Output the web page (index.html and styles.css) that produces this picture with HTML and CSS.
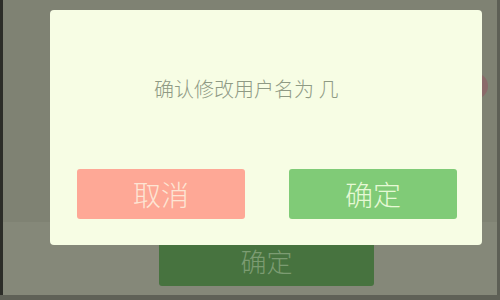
FILE: index.html
```html
<!DOCTYPE html>
<html lang="zh">
<head>
<meta charset="utf-8">
<link rel="stylesheet" href="styles.css">
</head>
<body>
<div class="screen">
  <div class="edge-left"></div>
  <div class="app">
    <div class="app-top">
      <span class="dot"></span>
    </div>
    <div class="app-bottom">
      <div class="bg-btn">确定</div>
    </div>
  </div>
  <div class="edge-right"></div>
  <div class="bottom-bar"></div>

  <div class="dialog">
    <p class="message">确认修改用户名为 几</p>
    <div class="actions">
      <div class="btn btn-cancel">取消</div>
      <div class="btn btn-ok">确定</div>
    </div>
  </div>
</div>
</body>
</html>
```

FILE: styles.css
```css
html, body {
  margin: 0;
  padding: 0;
  width: 500px;
  height: 300px;
  overflow: hidden;
}

body {
  font-family: "Noto Sans CJK SC", "Noto Sans", sans-serif;
  background: #62645a;
}

.screen {
  position: relative;
  width: 500px;
  height: 300px;
  display: grid;
  grid-template-columns: 3px 1fr 3px;
  grid-template-rows: 295px 5px;
}

.edge-left {
  background: #2c2d28;
}

.edge-right {
  background: #5d5f55;
}

.bottom-bar {
  grid-column: 1 / 4;
  background: #5f6157;
}

.app {
  display: flex;
  flex-direction: column;
}

.app-top {
  height: 222px;
  background: #7f8273;
  display: flex;
  align-items: center;
  justify-content: flex-end;
  padding-top: 0;
  box-sizing: border-box;
  padding-bottom: 50px;
}

.dot {
  width: 26px;
  height: 26px;
  border-radius: 50%;
  background: #8a6a6a;
  margin-right: 9px;
}

.app-bottom {
  flex: 1;
  background: #858879;
  padding-top: 14px;
  padding-left: 156px;
}

.bg-btn {
  width: 215px;
  height: 50px;
  border-radius: 3px;
  background: #47733f;
  color: #7c9c72;
  font-size: 26px;
  line-height: 50px;
  text-align: center;
  font-weight: 300;
}

.dialog {
  position: absolute;
  left: 50px;
  top: 10px;
  width: 432px;
  height: 235px;
  background: #f7fde4;
  border-radius: 4px;
  display: flex;
  flex-direction: column;
}

.message {
  margin: 0;
  padding: 66px 0 0 104px;
  font-size: 20px;
  line-height: 26px;
  color: #8f9a84;
  font-weight: 300;
  white-space: pre;
}

.actions {
  margin-top: 67px;
  padding: 0 25px 0 27px;
  display: flex;
  gap: 44px;
}

.btn {
  width: 168px;
  height: 50px;
  border-radius: 3px;
  font-size: 28px;
  line-height: 50px;
  text-align: center;
  font-weight: 300;
}

.btn-cancel {
  background: #fea896;
  color: #fde5d4;
}

.btn-ok {
  background: #80cb77;
  color: #e6f9d5;
}
```
